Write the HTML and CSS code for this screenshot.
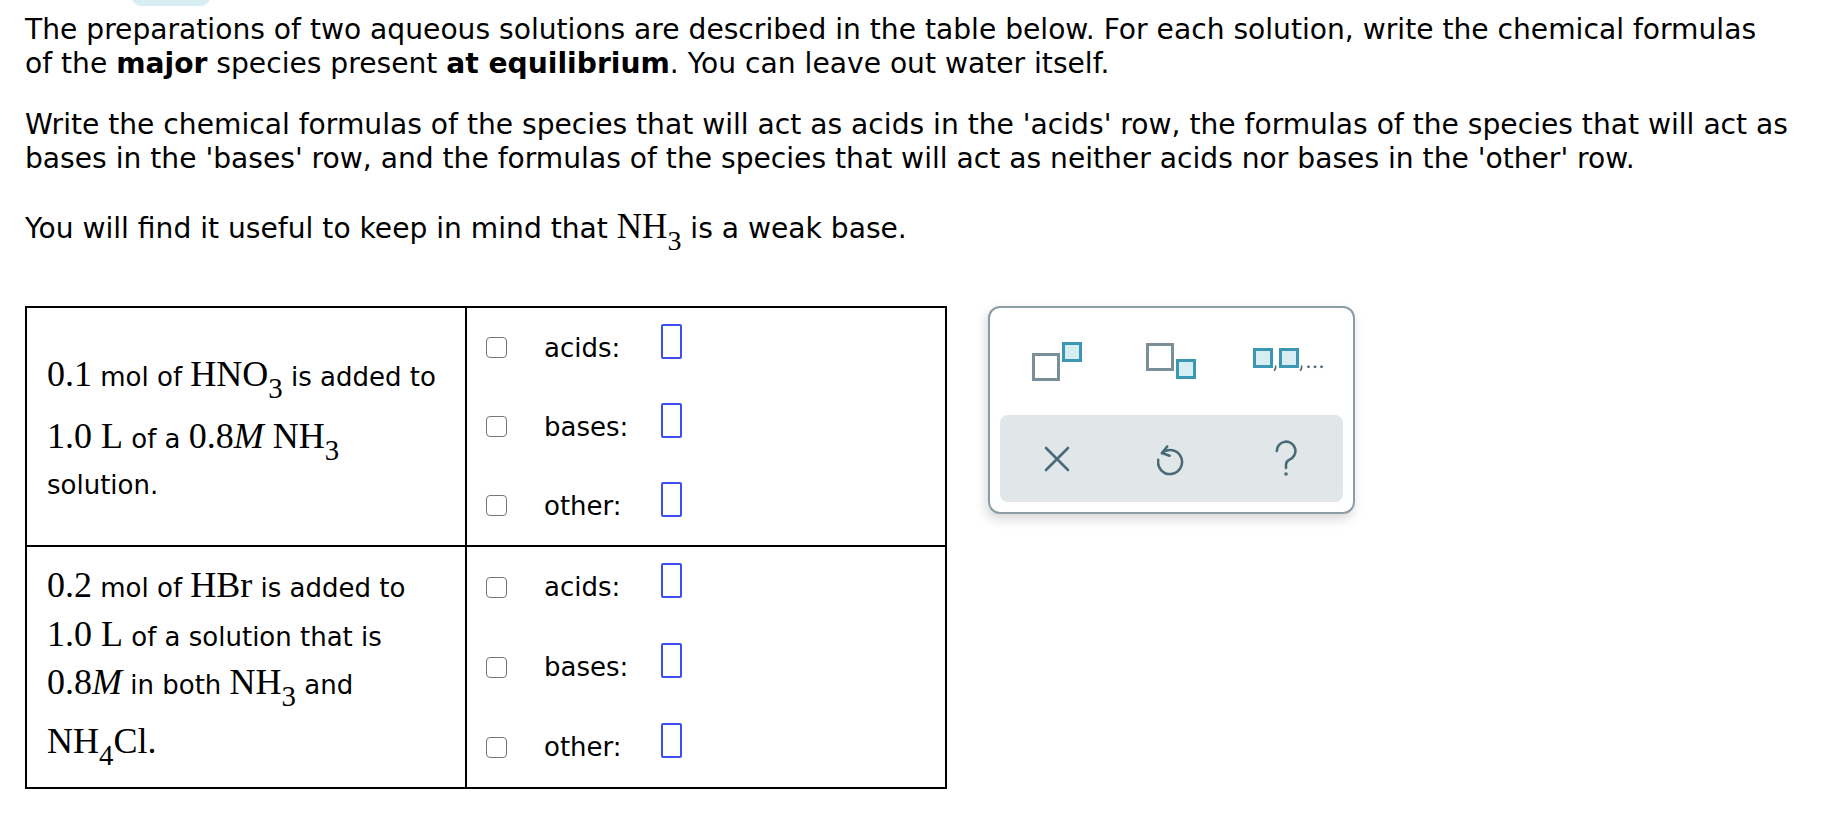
FILE: index.html
```html
<!DOCTYPE html>
<html>
<head>
<meta charset="utf-8">
<link rel="stylesheet" href="styles.css">
</head>
<body>
<div class="tab-peek"></div>
<main class="page">
  <section class="intro">
    <p>The preparations of two aqueous solutions are described in the table below. For each solution, write the chemical formulas<br>of the <b>major</b> species present <b>at equilibrium</b>. You can leave out water itself.</p>
    <p>Write the chemical formulas of the species that will act as acids in the 'acids' row, the formulas of the species that will act as<br>bases in the 'bases' row, and the formulas of the species that will act as neither acids nor bases in the 'other' row.</p>
    <p>You will find it useful to keep in mind that <span class="m">NH<sub>3</sub></span> is a weak base.</p>
  </section>

  <section class="work">
    <table class="grid">
      <tr class="first">
        <td class="desc">
          <span class="m">0.1</span> mol of <span class="m">HNO<sub>3</sub></span> is added to<br>
          <span class="m">1.0 L</span> of a <span class="m">0.8<i>M</i> NH<sub>3</sub></span><br>
          solution.
        </td>
        <td class="answers">
          <div class="row"><span class="cb"></span><span class="lbl">acids:</span><span class="slot"></span></div>
          <div class="row"><span class="cb"></span><span class="lbl">bases:</span><span class="slot"></span></div>
          <div class="row"><span class="cb"></span><span class="lbl">other:</span><span class="slot"></span></div>
        </td>
      </tr>
      <tr class="second">
        <td class="desc">
          <span class="m">0.2</span> mol of <span class="m">HBr</span> is added to<br>
          <span class="m">1.0 L</span> of a solution that is<br>
          <span class="m">0.8<i>M</i></span> in both <span class="m">NH<sub>3</sub></span> and<br>
          <span class="m">NH<sub>4</sub>Cl.</span>
        </td>
        <td class="answers">
          <div class="row"><span class="cb"></span><span class="lbl">acids:</span><span class="slot"></span></div>
          <div class="row"><span class="cb"></span><span class="lbl">bases:</span><span class="slot"></span></div>
          <div class="row"><span class="cb"></span><span class="lbl">other:</span><span class="slot"></span></div>
        </td>
      </tr>
    </table>

    <div class="palette">
      <div class="tools">
        <div class="tool">
          <svg width="50" height="40" viewBox="0 0 50 40"><rect x="1.5" y="12.5" width="25" height="25" class="sq-main"/><rect x="31.5" y="1.5" width="17" height="17" class="sq-sub"/></svg>
        </div>
        <div class="tool">
          <svg width="50" height="37" viewBox="0 0 50 37"><rect x="1.5" y="1.5" width="25" height="25" class="sq-main"/><rect x="31.5" y="17.5" width="17" height="17" class="sq-sub"/></svg>
        </div>
        <div class="tool">
          <svg class="list-icon" width="72" height="25" viewBox="0 0 72 25"><rect x="1.5" y="1.5" width="17" height="17" class="sq-sub"/><path d="M22.6 17.5v2.5l-1.3 3" class="punct"/><rect x="27.5" y="1.5" width="17" height="17" class="sq-sub"/><path d="M48.6 17.5v2.5l-1.3 3" class="punct"/><circle cx="55.5" cy="18.8" r="1.4" class="dot"/><circle cx="62" cy="18.8" r="1.4" class="dot"/><circle cx="68.5" cy="18.8" r="1.4" class="dot"/></svg>
        </div>
      </div>
      <div class="actions">
        <div class="tool">
          <svg width="26" height="26" viewBox="0 0 26 26"><path d="M2 2L24 24M24 2L2 24" class="act"/></svg>
        </div>
        <div class="tool">
          <svg width="28" height="36" viewBox="0 0 28 36"><path d="M5 12.1A12 12 0 1 1 1.2 18.9" class="act"/><path d="M10.2 5.5L5 12.1l7.6 2.6" class="act"/></svg>
        </div>
        <div class="tool">
          <svg width="24" height="38" viewBox="0 0 24 38"><path d="M2.8 11A9.3 9.3 0 1 1 15.5 19.6Q12 21.2 12 25v3" class="act"/><circle cx="12" cy="34" r="1.8" class="qdot"/></svg>
        </div>
      </div>
    </div>
  </section>
</main>
</body>
</html>
```

FILE: styles.css
```css
html, body {
  margin: 0;
  padding: 0;
  background: #ffffff;
}

body {
  font-family: "DejaVu Sans", Verdana, sans-serif;
  font-size: 28.15px;
  color: #000000;
  position: relative;
}

.tab-peek {
  position: absolute;
  left: 132px;
  top: -12px;
  width: 78px;
  height: 18px;
  border-radius: 9px;
  background: #d8edf4;
}

.page {
  padding: 13px 0 0 25px;
}

.intro p {
  margin: 0 0 27px 0;
  line-height: 34px;
  white-space: nowrap;
}

.m {
  font-family: "Liberation Serif", "Times New Roman", serif;
  font-size: 36px;
}

.m i {
  font-style: italic;
}

.m sub {
  font-size: 0.8em;
  vertical-align: -0.42em;
}

.intro .m {
  font-size: 35px;
  line-height: 47px;
}

.intro .m sub {
  line-height: 0;
}

.desc .m {
  display: inline-block;
  line-height: 40px;
  padding-top: 8px;
}

.desc .m sub {
  line-height: 36px;
}

.first .desc .m {
  padding-top: 10px;
}

.second .desc .m sub {
  line-height: 32px;
}

.work {
  display: flex;
  align-items: flex-start;
  gap: 41px;
  margin-top: 56px;
}

.grid {
  border-collapse: collapse;
  width: 922px;
  font-size: 26px;
}

.grid td {
  border: 2px solid #000000;
  padding: 0;
  vertical-align: middle;
}

.desc {
  width: 418px;
  padding: 0 0 6px 20px !important;
  line-height: 34.5px;
}

.answers {
  padding: 0 0 0 19px !important;
}

.row {
  display: flex;
  align-items: center;
  height: 80px;
}

.first .row {
  height: 79px;
}

.cb {
  width: 19px;
  height: 19px;
  border: 1.5px solid #767676;
  border-radius: 4px;
  flex: none;
}

.lbl {
  margin-left: 37px;
  width: 117px;
  flex: none;
}

.slot {
  width: 17px;
  height: 31px;
  border: 2px solid #3d4ff0;
  border-radius: 2px;
  flex: none;
  margin-top: -13px;
}

.palette {
  box-sizing: border-box;
  width: 367px;
  border: 2px solid #8b9ca6;
  border-radius: 12px;
  background: #ffffff;
  box-shadow: -2px 5px 12px rgba(0, 0, 0, 0.16);
  padding: 0 10px 10px 10px;
}

.tools {
  display: grid;
  grid-template-columns: repeat(3, 1fr);
  height: 107px;
}

.actions {
  display: grid;
  grid-template-columns: repeat(3, 1fr);
  height: 87px;
  background: #e1e6e9;
  border-radius: 8px;
}

.tool {
  display: flex;
  align-items: center;
  justify-content: center;
}

.list-icon {
  margin-left: 7px;
  margin-top: -3px;
}

.sq-main {
  fill: #ffffff;
  stroke: #7a9099;
  stroke-width: 3;
}

.sq-sub {
  fill: #d5edf3;
  stroke: #3b97b2;
  stroke-width: 3;
}

.punct {
  fill: none;
  stroke: #4d6773;
  stroke-width: 1.6;
}

.dot {
  fill: #4d6773;
}

.act {
  fill: none;
  stroke: #4a6a77;
  stroke-width: 2.6;
  stroke-linecap: round;
  stroke-linejoin: round;
}

.qdot {
  fill: #4a6a77;
}
```
